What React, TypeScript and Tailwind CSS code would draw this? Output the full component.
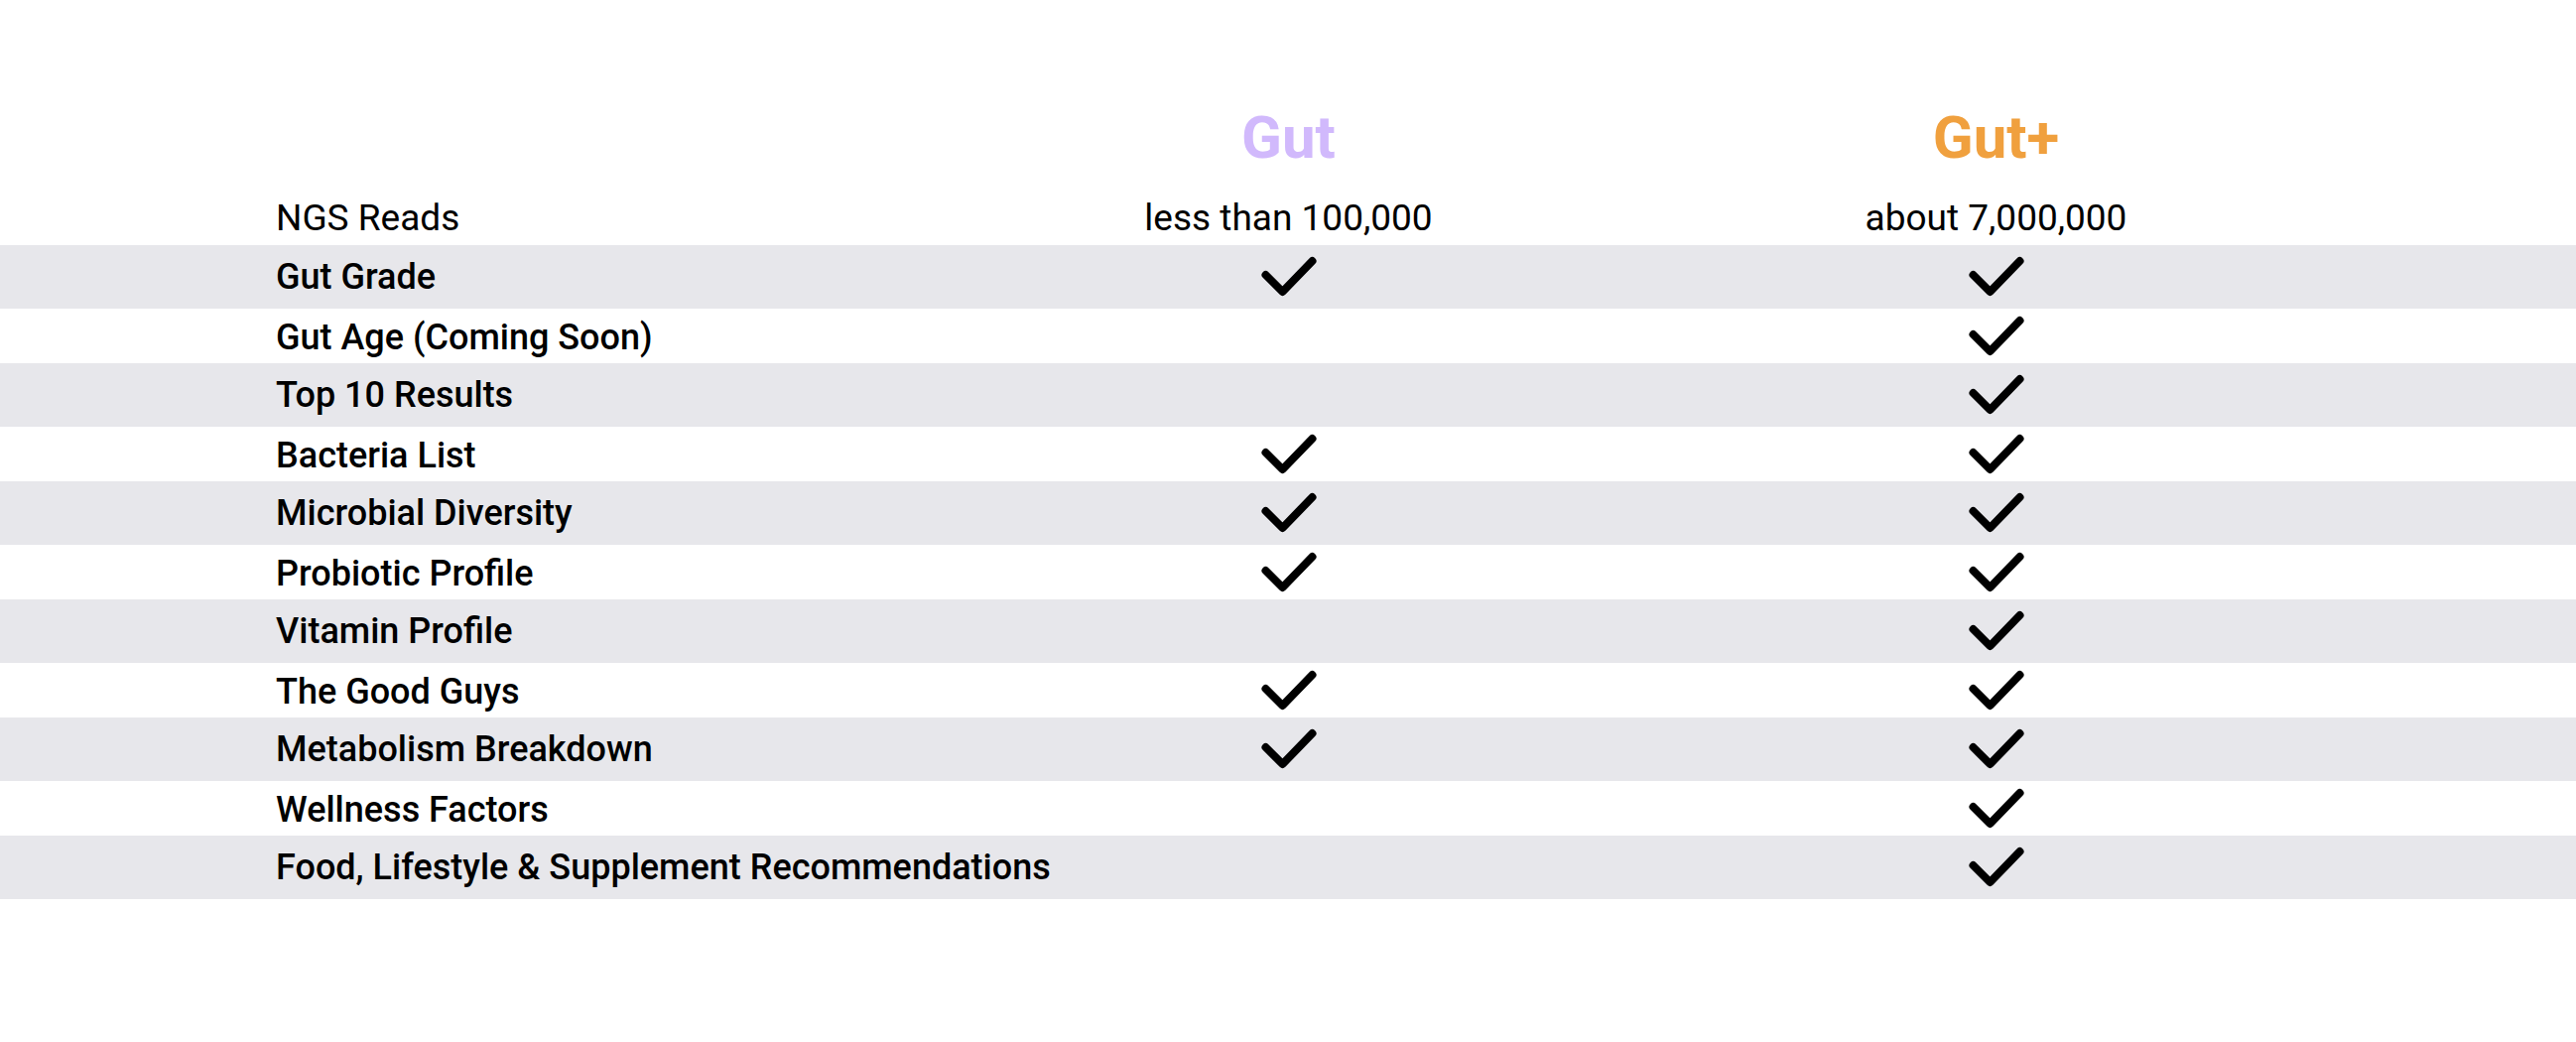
import React from "react";

type Row = { label: string; gut: boolean; plus: boolean };

const rows: Row[] = [
  { label: "Gut Grade", gut: true, plus: true },
  { label: "Gut Age (Coming Soon)", gut: false, plus: true },
  { label: "Top 10 Results", gut: false, plus: true },
  { label: "Bacteria List", gut: true, plus: true },
  { label: "Microbial Diversity", gut: true, plus: true },
  { label: "Probiotic Profile", gut: true, plus: true },
  { label: "Vitamin Profile", gut: false, plus: true },
  { label: "The Good Guys", gut: true, plus: true },
  { label: "Metabolism Breakdown", gut: true, plus: true },
  { label: "Wellness Factors", gut: false, plus: true },
  { label: "Food, Lifestyle & Supplement Recommendations", gut: false, plus: true },
];

function Check() {
  return (
    <svg width="58" height="42" viewBox="0 0 58 42" fill="none">
      <polyline
        points="5.5,19 22.5,36 52.5,5"
        stroke="#000"
        strokeWidth="8"
        strokeLinecap="round"
        strokeLinejoin="round"
      />
    </svg>
  );
}

export default function App() {
  return (
    <div
      className="w-[2596px] h-[1050px] bg-white text-black overflow-hidden"
      style={{ fontFamily: "Roboto, 'Liberation Sans', sans-serif" }}
    >
      <div className="pt-[109px]">
        <div className="grid grid-cols-[664px_713px_713px] pl-[278px] h-[60px] leading-none">
          <div />
          <div className="text-center text-[60px] font-bold text-[#d1b9fc]">Gut</div>
          <div className="text-center text-[60px] font-bold text-[#f0a03e]">Gut+</div>
        </div>
        <div className="grid grid-cols-[664px_713px_713px] pl-[278px] h-[78px] pt-[32px] leading-none text-[37px]">
          <div>NGS Reads</div>
          <div className="text-center">less than 100,000</div>
          <div className="text-center">about 7,000,000</div>
        </div>
        {rows.map((r, i) => {
          const gray = i % 2 === 0;
          return (
            <div
              key={r.label}
              className={
                gray
                  ? "grid grid-cols-[664px_713px_713px] pl-[278px] h-[64px] bg-[#e7e7eb]"
                  : "grid grid-cols-[664px_713px_713px] pl-[278px] h-[55px] bg-white"
              }
            >
              <div
                className={
                  gray
                    ? "pt-[14px] leading-none text-[36px] font-medium whitespace-nowrap"
                    : "pt-[11px] leading-none text-[36px] font-medium whitespace-nowrap"
                }
              >
                {r.label}
              </div>
              <div className="flex items-center justify-center">{r.gut ? <Check /> : null}</div>
              <div className="flex items-center justify-center">{r.plus ? <Check /> : null}</div>
            </div>
          );
        })}
      </div>
    </div>
  );
}
